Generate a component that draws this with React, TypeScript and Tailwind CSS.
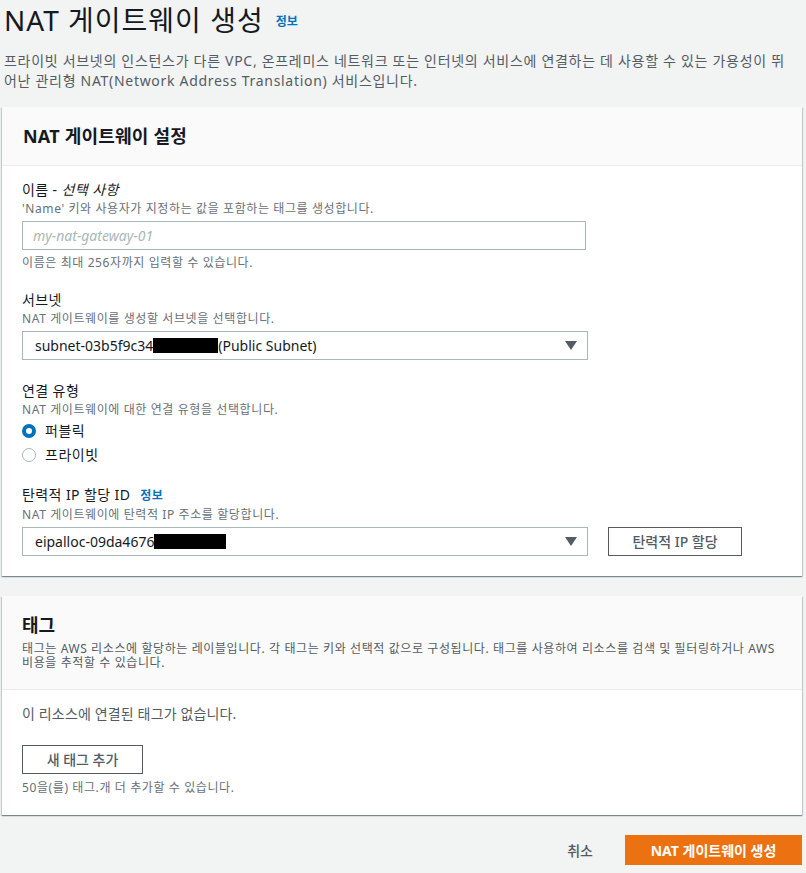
import React from 'react'

const font = { fontFamily: '"Noto Sans", "Noto Sans CJK KR", sans-serif' }

function Caret() {
  return (
    <svg width="12" height="9" viewBox="0 0 12 9" className="shrink-0">
      <path d="M0 0 H12 L6 9 Z" fill="#545b64" />
    </svg>
  )
}

function Field({ label, desc, children }: { label: React.ReactNode; desc: string; children: React.ReactNode }) {
  return (
    <div>
      <div className="text-[14px] leading-[20px] tracking-[0.4px] text-[#16191f]">{label}</div>
      <div className="text-[12px] leading-[17px] tracking-[0.6px] text-[#687078]">{desc}</div>
      <div className="mt-[4px]">{children}</div>
    </div>
  )
}

function Select({ prefix, redact, suffix }: { prefix: string; redact: number; suffix?: string }) {
  return (
    <div className="flex h-[29px] w-[566px] items-center justify-between border border-[#aab7b8] bg-white pl-[12px] pr-[10px] text-[14px] text-[#16191f]">
      <span className="flex items-center">
        {prefix}
        <span className="inline-block h-[15px] bg-black" style={{ width: redact }} />
        {suffix}
      </span>
      <Caret />
    </div>
  )
}

const cardShadow =
  'shadow-[0_1px_1px_0_rgba(0,28,36,0.3),1px_1px_1px_0_rgba(0,28,36,0.15),-1px_1px_1px_0_rgba(0,28,36,0.15)]'

export default function App() {
  return (
    <div className="min-h-[873px] w-[806px] bg-[#f2f3f3] px-[2px] pt-[2px]" style={font}>
      <div className="flex items-center gap-[12px] pl-[2px]">
        <h1 className="text-[28px] leading-[36px] font-normal tracking-[1px] text-[#16191f]">NAT 게이트웨이 생성</h1>
        <a className="mt-[4px] text-[12px] font-bold text-[#0073bb]">정보</a>
      </div>
      <p className="mt-[13px] pl-[2px] pr-[10px] text-[14px] leading-[20px] tracking-[0.7px] text-[#545b64]">
        프라이빗 서브넷의 인스턴스가 다른 VPC, 온프레미스 네트워크 또는 인터넷의 서비스에 연결하는 데 사용할 수 있는 가용성이 뛰어난 관리형 NAT(Network Address Translation) 서비스입니다.
      </p>

      <section className={`mt-[16px] w-[800px] bg-white ${cardShadow}`}>
        <div className="border-b border-[#eaeded] bg-[#fafafa] px-[21px] py-[16px]">
          <h2 className="text-[18px] leading-[26px] font-bold tracking-[0.2px] text-[#16191f]">NAT 게이트웨이 설정</h2>
        </div>
        <div className="px-[20px] pt-[14px] pb-[20px]">
          <Field
            label={<>이름 - <i>선택 사항</i></>}
            desc="'Name' 키와 사용자가 지정하는 값을 포함하는 태그를 생성합니다."
          >
            <div className="flex h-[29px] w-[564px] items-center border border-[#aab7b8] bg-white px-[10px] text-[14px] italic text-[#aab7b8]">
              my-nat-gateway-01
            </div>
          </Field>
          <div className="mt-[4px] text-[12px] leading-[17px] tracking-[0.6px] text-[#687078]">이름은 최대 256자까지 입력할 수 있습니다.</div>

          <div className="mt-[19px]">
            <Field label="서브넷" desc="NAT 게이트웨이를 생성할 서브넷을 선택합니다.">
              <Select prefix="subnet-03b5f9c34" redact={65} suffix="(Public Subnet)" />
            </Field>
          </div>

          <div className="mt-[21px]">
            <Field label="연결 유형" desc="NAT 게이트웨이에 대한 연결 유형을 선택합니다.">
              <div className="-mt-[1px] flex flex-col gap-[4px]">
                <label className="flex items-center gap-[9px] text-[14px] leading-[20px] tracking-[0.5px] text-[#16191f]">
                  <span className="inline-block h-[14px] w-[14px] rounded-full border-[4px] border-[#0073bb] bg-white" />
                  퍼블릭
                </label>
                <label className="flex items-center gap-[9px] text-[14px] leading-[20px] tracking-[0.5px] text-[#16191f]">
                  <span className="inline-block h-[14px] w-[14px] rounded-full border border-[#aab7b8] bg-white" />
                  프라이빗
                </label>
              </div>
            </Field>
          </div>

          <div className="mt-[20px]">
            <Field
              label={<>탄력적 IP 할당 ID <a className="ml-[6px] text-[12px] font-bold text-[#0073bb]">정보</a></>}
              desc="NAT 게이트웨이에 탄력적 IP 주소를 할당합니다."
            >
              <div className="flex items-center gap-[20px]">
                <Select prefix="eipalloc-09da4676" redact={72} />
                <button className="h-[29px] w-[134px] border border-[#545b64] bg-white text-[14px] font-medium text-[#545b64]">
                  탄력적 IP 할당
                </button>
              </div>
            </Field>
          </div>
        </div>
      </section>

      <section className={`mt-[20px] w-[800px] bg-white ${cardShadow}`}>
        <div className="border-b border-[#eaeded] bg-[#fafafa] px-[20px] pt-[16px] pb-[19px]">
          <h2 className="text-[18px] leading-[26px] font-bold text-[#16191f]">태그</h2>
          <p className="mt-[4px] text-[12px] leading-[14px] tracking-[0.6px] text-[#545b64]">
            태그는 AWS 리소스에 할당하는 레이블입니다. 각 태그는 키와 선택적 값으로 구성됩니다. 태그를 사용하여 리소스를 검색 및 필터링하거나 AWS 비용을 추적할 수 있습니다.
          </p>
        </div>
        <div className="px-[20px] pt-[14px] pb-[19px]">
          <div className="text-[14px] leading-[20px] tracking-[0.15px] text-[#545b64]">이 리소스에 연결된 태그가 없습니다.</div>
          <button className="mt-[21px] h-[29px] w-[121px] border border-[#545b64] bg-white text-[14px] font-medium text-[#545b64]">
            새 태그 추가
          </button>
          <div className="mt-[5px] text-[12px] leading-[17px] tracking-[0.6px] text-[#687078]">50을(를) 태그.개 더 추가할 수 있습니다.</div>
        </div>
      </section>

      <div className="mt-[20px] flex w-[800px] items-center justify-end gap-[20px]">
        <button className="px-[12px] text-[14px] font-medium text-[#545b64]">취소</button>
        <button className="h-[30px] w-[177px] bg-[#ec7211] text-[14px] font-bold text-white">NAT 게이트웨이 생성</button>
      </div>
    </div>
  )
}
